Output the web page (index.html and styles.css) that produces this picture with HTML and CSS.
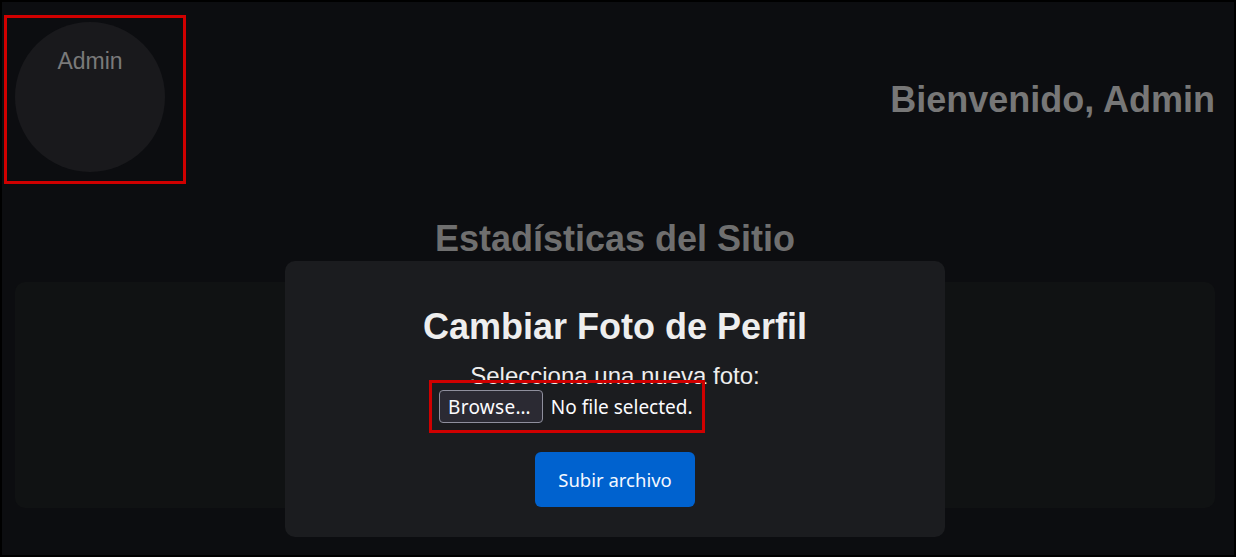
FILE: index.html
```html
<!DOCTYPE html>
<html lang="es">
<head>
  <meta charset="UTF-8" />
  <meta name="viewport" content="width=device-width, initial-scale=1.0"/>
  <title>Panel de Administración</title>
  <link rel="stylesheet" href="styles.css">
</head>
<body>
  <header class="cabecera">
    <div class="marco-avatar">
      <div class="avatar">Admin</div>
    </div>
    <h1 class="bienvenida">Bienvenido, Admin</h1>
  </header>

  <h2 class="titulo-seccion">Estadísticas del Sitio</h2>
  <section class="estadisticas"></section>

  <!-- modal para cambiar la foto -->
  <div class="fondo-modal">
    <form class="modal">
      <h2>Cambiar Foto de Perfil</h2>
      <label class="etiqueta">Selecciona una nueva foto:</label>
      <div class="selector">
        <span class="campo">
          <button type="button" class="examinar">Browse…</button>
          <span class="sin-archivo">No file selected.</span>
        </span>
      </div>
      <button type="submit" class="subir">Subir archivo</button>
    </form>
  </div>
</body>
</html>
```

FILE: styles.css
```css
html, body {
  height: 100%;
}
body {
  margin: 0;
  box-sizing: border-box;
  border: 2px solid #000;
  background: #0c0d10;
  color: #777;
  font-family: "Liberation Sans", Arial, sans-serif;
  overflow: hidden;
}
.cabecera {
  display: flex;
  justify-content: space-between;
  align-items: center;
  padding: 13px 19px 0 2px;
}
.marco-avatar {
  border: 3px solid #d00000;
  padding: 4px 18px 9px 8px;
}
.avatar {
  width: 150px;
  height: 150px;
  border-radius: 50%;
  background: #19191c;
  box-sizing: border-box;
  padding-top: 26px;
  text-align: center;
  font-size: 23px;
  color: #7a7a7a;
}
.bienvenida {
  margin: 0;
  font-size: 36px;
  color: #777;
}
.titulo-seccion {
  margin: 34px 0 23px;
  padding-right: 6px;
  text-align: center;
  font-size: 36px;
  line-height: 41px;
  color: #6f6f6f;
}
.estadisticas {
  margin: 0 19px 0 13px;
  height: 226px;
  background: #101213;
  border-radius: 10px;
}
.fondo-modal {
  position: fixed;
  inset: 0;
  display: flex;
  justify-content: center;
  align-items: flex-start;
  padding: 261px 21px 0 15px;
}
.modal {
  width: 660px;
  box-sizing: border-box;
  padding: 45px 30px 30px;
  background: #1b1c1f;
  border-radius: 10px;
  text-align: center;
}
.modal h2 {
  margin: 0 0 15px;
  font-size: 36px;
  line-height: 41px;
  color: #eee;
}
.etiqueta {
  display: block;
  font-size: 24px;
  line-height: 28px;
  color: #eee;
}
.selector {
  display: inline-block;
  width: 352px;
  text-align: left;
}
.campo {
  display: inline-flex;
  align-items: center;
  gap: 8px;
  padding-right: 2px;
  outline: 3px solid #d00000;
  outline-offset: 7px;
  font-family: "Noto Sans", sans-serif;
  font-size: 19px;
  color: #fbfbfe;
}
.examinar {
  height: 33px;
  padding: 0 11px 0 8px;
  background: #2b2a33;
  color: #fbfbfe;
  border: 1px solid #8f8f9d;
  border-radius: 4px;
  font: inherit;
  letter-spacing: 0.3px;
}
.subir {
  display: block;
  margin: 29px auto 0;
  width: 160px;
  height: 55px;
  background: #0062cf;
  color: #f4f8ff;
  border: none;
  border-radius: 6px;
  font-family: "Noto Sans", sans-serif;
  font-size: 18.5px;
  cursor: pointer;
}
```
